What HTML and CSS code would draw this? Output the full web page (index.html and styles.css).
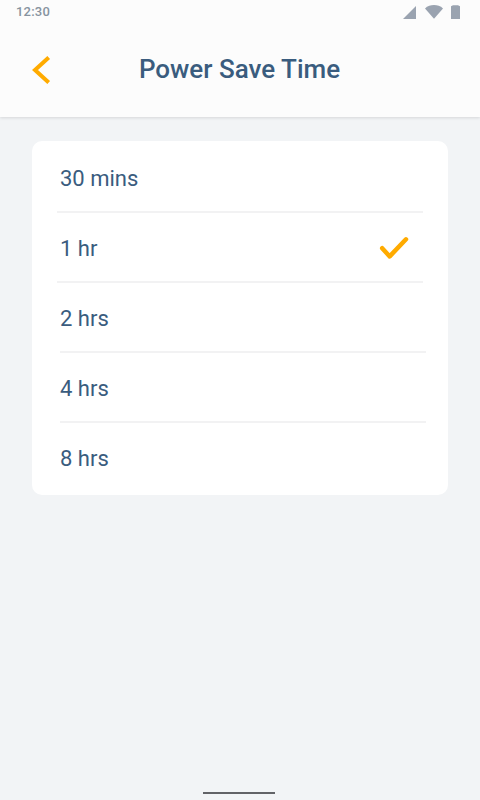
FILE: index.html
```html
<!DOCTYPE html>
<html lang="en">
<head>
  <meta charset="UTF-8">
  <meta name="viewport" content="width=device-width, initial-scale=1.0">
  <title>Power Save Time</title>
  <link rel="stylesheet" href="styles.css">
</head>
<body>
  <div class="screen">
    <header class="header">
      <div class="status">
        <span class="time">12:30</span>
        <svg class="status-icons" width="58" height="16" viewBox="0 0 58 16">
          <path d="M0 14L13 1V14Z"/>
          <path d="M22 3.4C27 -1 35 -1 40 3.4L31 13.8Z"/>
          <path d="M48 1.2L50 0.3H55L57 1.2V14H48Z"/>
        </svg>
      </div>
      <div class="nav">
        <svg class="back" width="20" height="30" viewBox="0 0 20 30">
          <path d="M17.7 2.5L4 15L17.7 27.5"/>
        </svg>
        <h1 class="title">Power Save Time</h1>
      </div>
    </header>

    <ul class="list">
      <li class="item">30 mins</li>
      <li class="item checked">
        1 hr
        <svg class="check" width="30" height="24" viewBox="0 0 30 24">
          <path d="M3.2 12.2L10.7 20.4L27 3.3"/>
        </svg>
      </li>
      <li class="item wide">2 hrs</li>
      <li class="item wide">4 hrs</li>
      <li class="item">8 hrs</li>
    </ul>

    <div class="home-bar"></div>
  </div>
</body>
</html>
```

FILE: styles.css
```css
* {
  box-sizing: border-box;
}

body {
  margin: 0;
  font-family: Roboto, "Liberation Sans", sans-serif;
  color: #3a5c7e;
}

.screen {
  display: flex;
  flex-direction: column;
  width: 480px;
  height: 800px;
  background-color: #f2f4f6;
}

.header {
  height: 117px;
  background-color: #fcfcfc;
  box-shadow: 0 1px 3px rgba(0, 0, 0, 0.12);
}

.status {
  display: flex;
  justify-content: space-between;
  height: 24px;
  padding: 4px 19px 0 16px;
}

.time {
  font-size: 13px;
  font-weight: 500;
  line-height: 16px;
  letter-spacing: 0.2px;
  color: #8793a0;
}

.status-icons {
  margin-top: 1px;
  fill: #9aa3b0;
}

.nav {
  display: grid;
  grid-template-columns: 48px 1fr 48px;
  align-items: center;
  height: 90px;
  padding: 0 32px 0 31px;
}

.back {
  margin-top: 2px;
  fill: none;
  stroke: #ffab00;
  stroke-width: 4;
}

.title {
  margin: 0;
  font-size: 26px;
  font-weight: 500;
  text-align: center;
}

.list {
  height: 354px;
  margin: 24px 32px 0;
  padding: 2px 0 0;
  list-style: none;
  border-radius: 10px;
  background-color: #fff;
}

.item {
  display: flex;
  justify-content: space-between;
  align-items: center;
  height: 70px;
  margin: 0 25px;
  padding: 2px 14px 0 3px;
  font-size: 22px;
  border-bottom: 2px solid #f2f2f3;
}

.wide {
  margin: 0 22px 0 28px;
  padding-left: 0;
}

.item:last-child {
  border-bottom-color: transparent;
}

.check {
  fill: none;
  stroke: #ffab00;
  stroke-width: 4.5;
  stroke-linecap: round;
  stroke-linejoin: round;
}

.home-bar {
  width: 72px;
  height: 2px;
  margin: auto 0 6px 203px;
  background-color: #626367;
}
```
